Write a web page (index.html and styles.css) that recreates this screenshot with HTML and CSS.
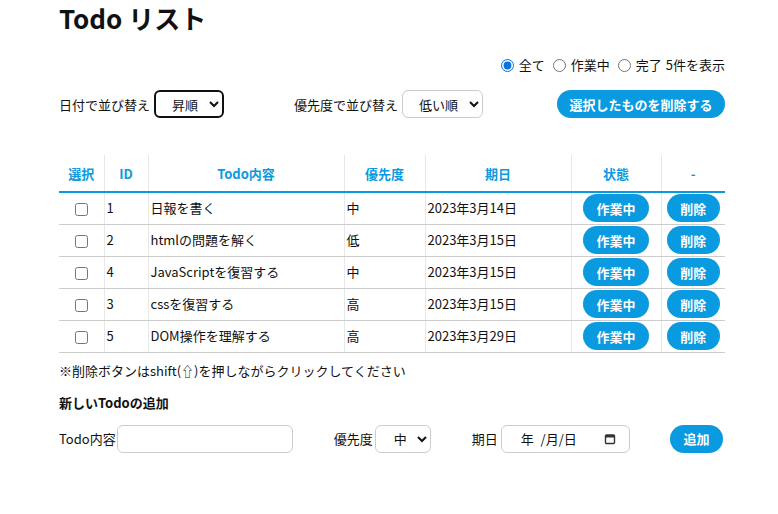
FILE: index.html
```html
<!DOCTYPE html>
<html lang="ja">
<head>
<meta charset="utf-8">
<link rel="stylesheet" href="styles.css">
</head>
<body>
<div class="wrap">
  <h1 class="title">Todo リスト</h1>
  <div class="filter">
    <label class="radio"><input type="radio" name="f" checked>全て</label>
    <label class="radio"><input type="radio" name="f">作業中</label>
    <label class="radio"><input type="radio" name="f">完了</label>
    <span class="count">5件を表示</span>
  </div>
  <div class="sortrow">
    <div class="sort">日付で並び替え <select class="sel sel-focus"><option>昇順</option></select></div>
    <div class="sort sort2">優先度で並び替え <select class="sel sel-prio"><option>低い順</option></select></div>
    <button class="btn btn-bulk">選択したものを削除する</button>
  </div>
  <table class="todo">
    <thead>
      <tr>
        <th class="c-sel">選択</th><th class="c-id">ID</th><th class="c-todo">Todo内容</th><th class="c-pri">優先度</th><th class="c-date">期日</th><th class="c-state">状態</th><th class="c-del">-</th>
      </tr>
    </thead>
    <tbody>
      <tr><td class="center"><input type="checkbox"></td><td>1</td><td>日報を書く</td><td>中</td><td>2023年3月14日</td><td class="center"><button class="btn btn-state">作業中</button></td><td class="center"><button class="btn btn-del">削除</button></td></tr>
      <tr><td class="center"><input type="checkbox"></td><td>2</td><td>htmlの問題を解く</td><td>低</td><td>2023年3月15日</td><td class="center"><button class="btn btn-state">作業中</button></td><td class="center"><button class="btn btn-del">削除</button></td></tr>
      <tr><td class="center"><input type="checkbox"></td><td>4</td><td>JavaScriptを復習する</td><td>中</td><td>2023年3月15日</td><td class="center"><button class="btn btn-state">作業中</button></td><td class="center"><button class="btn btn-del">削除</button></td></tr>
      <tr><td class="center"><input type="checkbox"></td><td>3</td><td>cssを復習する</td><td>高</td><td>2023年3月15日</td><td class="center"><button class="btn btn-state">作業中</button></td><td class="center"><button class="btn btn-del">削除</button></td></tr>
      <tr><td class="center"><input type="checkbox"></td><td>5</td><td>DOM操作を理解する</td><td>高</td><td>2023年3月29日</td><td class="center"><button class="btn btn-state">作業中</button></td><td class="center"><button class="btn btn-del">削除</button></td></tr>
    </tbody>
  </table>
  <p class="note">※削除ボタンはshift(⇧)を押しながらクリックしてください</p>
  <h2 class="subhead">新しいTodoの追加</h2>
  <div class="addrow">
    <label class="field">Todo内容<input type="text" class="txt"></label>
    <label class="field f-pri">優先度<select class="sel sel-small"><option>中</option></select></label>
    <label class="field f-date">期日<span class="date"><span class="date-txt">年 /月/日</span><svg class="cal" width="12" height="12" viewBox="0 0 12 12"><rect x="1.5" y="2" width="9" height="8.5" rx="1" fill="none" stroke="#333" stroke-width="1.4"/><rect x="1.5" y="2" width="9" height="2.5" fill="#333"/></svg></span></label>
    <button class="btn btn-add">追加</button>
  </div>
</div>
</body>
</html>
```
FILE: styles.css
```css
* { box-sizing: border-box; }
body {
  margin: 0;
  font-family: "Noto Sans CJK JP", "Noto Sans", sans-serif;
  font-size: 13px;
  color: #111;
  background: #fff;
}
.wrap {
  width: 666px;
  margin-left: 59px;
}
.title {
  margin: 0;
  font-size: 26px;
  font-weight: 700;
  line-height: 36px;
}
.filter {
  display: flex;
  justify-content: flex-end;
  align-items: center;
  margin-top: 20px;
  height: 18px;
  line-height: 18px;
}
.radio {
  display: inline-flex;
  align-items: center;
  margin-left: 3px;
}
.radio:first-child { margin-left: 0; }
.radio input {
  margin: 0 5px 0 5px;
  width: 13px;
  height: 13px;
  accent-color: #0b73d9;
}
.count { margin-left: 4px; }
.sortrow {
  display: flex;
  align-items: center;
  margin-top: 16px;
  height: 28px;
}
.sort {
  display: flex;
  align-items: center;
  gap: 4px;
}
.sort2 { margin-left: 70px; }
.sel {
  height: 28px;
  font-family: inherit;
  font-size: 13px;
  border: 1px solid #ccc;
  border-radius: 6px;
  background: #fff;
  padding: 0 4px 0 12px;
  color: #111;
}
.sel-focus {
  width: 70px;
  border: 2px solid #111;
}
.sel-prio { width: 81px; }
.btn {
  border: none;
  border-radius: 14px;
  background: #0a9ae0;
  color: #fff;
  font-family: inherit;
  font-weight: 700;
  font-size: 13px;
  height: 28px;
  padding: 0;
}
.btn-bulk {
  margin-left: auto;
  width: 168px;
}
.todo {
  margin-top: 37px;
  width: 666px;
  border-collapse: collapse;
  table-layout: fixed;
}
.todo th {
  color: #0a9ae0;
  font-weight: 700;
  height: 37px;
  border-bottom: 2px solid #0a9ae0;
  border-left: 1px solid #e8e8e8;
  text-align: center;
  padding: 0;
}
.todo td {
  height: 32px;
  border-bottom: 1px solid #ccc;
  border-left: 1px solid #e8e8e8;
  padding: 0 2px;
  line-height: 18px;
}
.todo th:first-child, .todo td:first-child { border-left: none; }
.c-sel { width: 45px; }
.c-id { width: 44px; }
.c-todo { width: 196px; }
.c-pri { width: 81px; }
.c-date { width: 146px; }
.c-state { width: 90px; }
.c-del { width: 64px; }
.center { text-align: center; }
.todo td.center { padding: 0; }
.todo input[type=checkbox] {
  margin: 0;
  width: 13px;
  height: 13px;
  vertical-align: middle;
}
.btn-state { width: 66px; }
.btn-del { width: 53px; }
.note {
  margin: 9px 0 0;
  line-height: 18px;
}
.subhead {
  margin: 14px 0 0;
  font-size: 13px;
  font-weight: 700;
  line-height: 18px;
}
.addrow {
  display: flex;
  align-items: center;
  margin-top: 13px;
  height: 28px;
}
.field {
  display: flex;
  align-items: center;
}
.txt {
  width: 176px;
  height: 28px;
  margin-left: 1px;
  border: 1px solid #ccc;
  border-radius: 6px;
}
.f-pri { margin-left: 41px; }
.sel-small {
  width: 56px;
  margin-left: 2px;
  padding-left: 14px;
}
.f-date { margin-left: 41px; }
.date {
  display: flex;
  align-items: center;
  justify-content: space-between;
  width: 129px;
  height: 28px;
  margin-left: 3px;
  border: 1px solid #ccc;
  border-radius: 6px;
  padding: 0 13px 0 19px;
  word-spacing: 4px;
}
.btn-add {
  margin-left: auto;
  margin-right: 2px;
  width: 53px;
}
```
